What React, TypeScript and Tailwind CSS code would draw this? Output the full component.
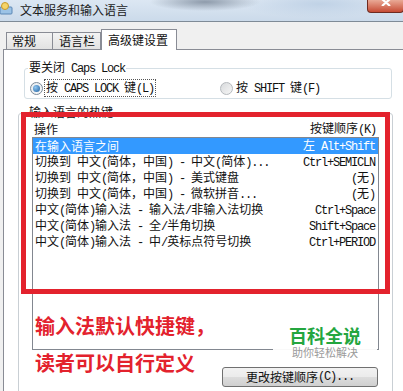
import React from "react";

const rows: [string, string][] = [
  ["在输入语言之间", "左 Alt+Shift"],
  ["切换到 中文(简体，中国) - 中文(简体)...", "Ctrl+SEMICLN"],
  ["切换到 中文(简体，中国) - 美式键盘", "(无)"],
  ["切换到 中文(简体，中国) - 微软拼音...", "(无)"],
  ["中文(简体)输入法 - 输入法/非输入法切换", "Ctrl+Space"],
  ["中文(简体)输入法 - 全/半角切换", "Shift+Space"],
  ["中文(简体)输入法 - 中/英标点符号切换", "Ctrl+PERIOD"],
];

// latin runs get the narrow SimSun-like monospace width (6px per char)
function T({ s }: { s: string }) {
  const parts = s.split(/([\x00-\xff]+)/).filter(Boolean);
  return (
    <>
      {parts.map((p, i) =>
        /^[\x00-\xff]+$/.test(p) ? (
          <span
            key={i}
            className="font-['Liberation_Mono','Noto_Sans_CJK_SC',monospace] tracking-[-1.2px] whitespace-pre"
          >
            {p}
          </span>
        ) : (
          <span key={i}>{p}</span>
        )
      )}
    </>
  );
}

function Radio({ checked }: { checked?: boolean }) {
  return (
    <span
      className={
        "flex h-[13px] w-[13px] shrink-0 items-center justify-center rounded-full border " +
        (checked
          ? "border-[#7b8a99] bg-gradient-to-br from-[#e6ebf0] to-[#f8f8f8]"
          : "border-[#b5b9bd] bg-gradient-to-br from-[#d8dadc] to-[#f6f6f6]")
      }
    >
      {checked && (
        <span className="h-[7px] w-[7px] rounded-full bg-[radial-gradient(circle_at_35%_35%,#8fc7f2,#1f5f9e)]" />
      )}
    </span>
  );
}

export default function App() {
  return (
    <div className="relative flex h-[391px] w-[403px] flex-col overflow-hidden bg-[#f0f0f0] font-['Noto_Sans_CJK_SC',sans-serif] text-[12px] leading-[16px] text-[#111]">
      {/* title bar */}
      <div className="flex h-[22px] shrink-0 items-start border-b border-[#7f8b97] bg-[radial-gradient(ellipse_55px_9px_at_205px_2px,#8e9bab,transparent),radial-gradient(ellipse_80px_14px_at_320px_4px,#c0d2e6,transparent),linear-gradient(#dce7f3,#cbdaea)]">
        <svg width="13" height="13" viewBox="0 0 13 13" className="mt-[2px] shrink-0">
          <rect x="0" y="5" width="12" height="7" rx="1" fill="#9cc3e6" stroke="#5b86b5" />
          <circle cx="5" cy="4" r="3.5" fill="#f5d46a" stroke="#c79a2a" />
        </svg>
        <span className="ml-[7px] mt-[3px] text-[12px] leading-[14px] text-[#1b1b1b]">文本服务和输入语言</span>
        <div className="ml-auto mr-[-1px] flex h-[13px] w-[37px] items-start justify-center rounded-b-[4px] border border-t-0 border-[#6e2a20] bg-gradient-to-b from-[#e9a996] to-[#c54a34]">
          <svg width="10" height="7" viewBox="0 0 10 7" className="mt-[-1px]">
            <path d="M1 0 L5 3.5 L9 0 M1 7 L5 3.5 L9 7" stroke="#fff" strokeWidth="2.2" fill="none" />
          </svg>
        </div>
      </div>

      {/* tabs */}
      <div className="flex h-[27px] shrink-0 items-end pl-[6px] pt-[7px]">
        <div className="h-[17px] w-[47px] border border-b-0 border-[#898c95] bg-gradient-to-b from-[#f3f3f3] to-[#e2e2e2] pl-[5px] leading-[16px]">常规</div>
        <div className="h-[17px] w-[48px] border border-b-0 border-l-0 border-[#898c95] bg-gradient-to-b from-[#f3f3f3] to-[#e2e2e2] pl-[6px] leading-[16px]">语言栏</div>
        <div className="relative z-10 mb-[-1px] h-[21px] w-[76px] border border-b-0 border-[#898c95] bg-white pl-[6px] pt-[2px] leading-[16px]">高级键设置</div>
      </div>

      {/* tab panel */}
      <div className="ml-[3px] mr-[-6px] flex-1 border-l border-t border-[#898c95] bg-white pl-[14px]">
        {/* caps lock group */}
        <div className="relative ml-[6px] mt-[18px] h-[31px] w-[368px] rounded-[3px] border border-[#d5dfe5]">
          <span className="absolute left-[3px] top-[-10px] bg-white px-[1px] leading-[16px]">
            <T s="要关闭 Caps Lock" />
          </span>
          <div className="flex items-center pt-[10px]">
            <div className="flex w-[195px] items-center pl-[5px]">
              <Radio checked />
              <span className="ml-[1px] border border-dotted border-[#555] px-[1px] leading-[14px]">
                <T s="按 CAPS LOCK 键(L)" />
              </span>
            </div>
            <div className="flex items-center">
              <Radio />
              <span className="ml-[3px] leading-[14px]">
                <T s="按 SHIFT 键(F)" />
              </span>
            </div>
          </div>
        </div>

        {/* hotkey group */}
        <div className="relative mt-[14px] h-[300px] w-[375px] rounded-[3px] border border-[#c9cfd4] pl-[13px] pt-[7px]">
          <span className="absolute left-[9px] top-[-10px] bg-white px-[1px] leading-[16px]">输入语言的热键</span>
          <div className="flex h-[16px] w-[347px] items-center justify-between pl-[2px] pr-[3px]">
            <span>操作</span>
            <span>
              <T s="按键顺序(K)" />
            </span>
          </div>
          <div className="h-[213px] w-[347px] border border-[#828790] bg-white">
            {rows.map(([a, b], i) => (
              <div
                key={i}
                className={
                  "flex h-[16px] items-center justify-between whitespace-nowrap pl-[2px] pr-[3px] " +
                  (i === 0 ? "bg-[#3399ff] text-white" : "")
                }
              >
                <span>
                  <T s={a} />
                </span>
                <span className="shrink-0 pl-[4px]">
                  <T s={b} />
                </span>
              </div>
            ))}
          </div>
          <button className="ml-[190px] mt-[17px] flex h-[20px] w-[156px] items-center justify-center rounded-[3px] border border-[#707070] bg-[linear-gradient(#f2f2f2,#ebebeb_50%,#dddddd_50%,#cfcfcf)] leading-[14px] text-[#111]">
            <T s="更改按键顺序(C)..." />
          </button>
        </div>
      </div>

      {/* red annotation */}
      <div className="absolute left-[21px] top-[112px] h-[182px] w-[369px] border-[5px] border-[#e3222d]" />
      <div className="absolute left-[35px] top-[316px] text-[20px] font-bold leading-[20px] text-[#e3222d]">输入法默认快捷键，</div>
      <div className="absolute left-[35px] top-[353px] text-[20px] font-bold leading-[20px] text-[#e3222d]">读者可以自行定义</div>

      {/* watermark */}
      <div className="absolute left-[273px] top-[325px] flex w-[104px] flex-col items-center bg-white/95 pb-[2px]">
        <span className="text-[18px] font-bold leading-[21px] text-[#24a63f]">百科全说</span>
        <span className="text-[11px] leading-[13px] text-[#9a9a9a]">助你轻松解决</span>
      </div>
    </div>
  );
}
